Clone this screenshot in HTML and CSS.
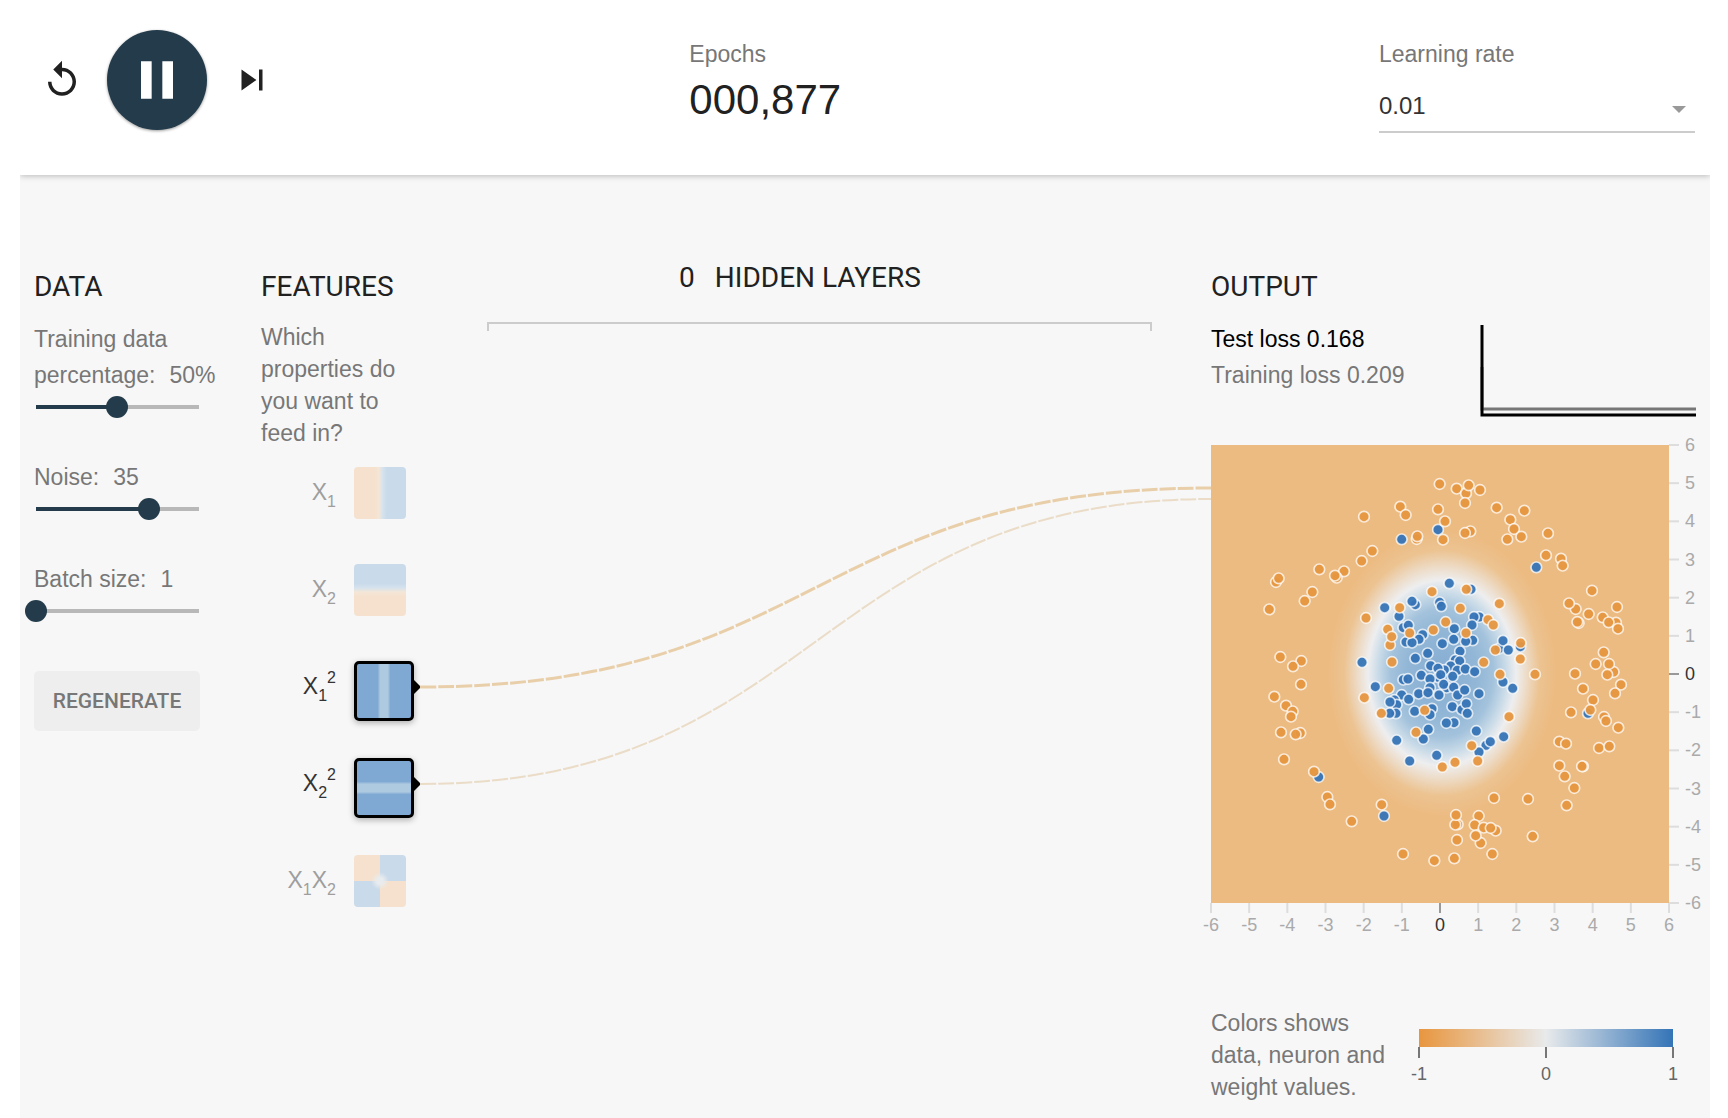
FILE: index.html
```html
<!DOCTYPE html>
<html lang="en">

<head>
  <meta charset="UTF-8">
  <meta name="viewport" content="width=device-width, initial-scale=1.0">
  <title>Neural network playground</title>
  <link rel="stylesheet" href="styles.css">
</head>

<body>
  <div class="app">
    <header class="topBar">
      <div class="controls">
        <button class="iconBtn" aria-label="Reset">
          <svg viewBox="0 0 24 24"><path d="M12 5V1L7 6l5 5V7c3.31 0 6 2.69 6 6s-2.69 6-6 6-6-2.69-6-6H4c0 4.42 3.58 8 8 8s8-3.58 8-8-3.58-8-8-8z"/></svg>
        </button>
        <button class="playBtn" aria-label="Pause">
          <svg viewBox="0 0 24 24"><path d="M6 19h4V5H6v14zm8-14v14h4V5h-4z"/></svg>
        </button>
        <button class="iconBtn" aria-label="Step">
          <svg viewBox="0 0 24 24"><path d="M6 18l8.5-6L6 6v12zM16 6v12h2V6h-2z"/></svg>
        </button>
      </div>
      <div class="stat">
        <div class="statLabel">Epochs</div>
        <div class="epochs">000,877</div>
      </div>
      <div class="stat">
        <label class="statLabel" for="learningRate">Learning rate</label>
        <div class="selectBox">
          <select id="learningRate" class="select">
            <option>0.001</option>
            <option>0.003</option>
            <option selected>0.01</option>
            <option>0.03</option>
            <option>0.1</option>
          </select>
        </div>
      </div>
    </header>

    <main class="playground">
      <section class="column">
        <h2 class="title">DATA</h2>
        <div class="setting">
          <label for="percent">Training data<br>percentage:<span class="value">50%</span></label>
          <input type="range" id="percent" class="slider" min="10" max="90" value="50" style="--fill: 50%">
        </div>
        <div class="setting">
          <label for="noise">Noise:<span class="value">35</span></label>
          <input type="range" id="noise" class="slider" min="0" max="50" value="35" style="--fill: 70%">
        </div>
        <div class="setting">
          <label for="batch">Batch size:<span class="value">1</span></label>
          <input type="range" id="batch" class="slider" min="1" max="30" value="1" style="--fill: 0%">
        </div>
        <button class="regenerateBtn">REGENERATE</button>
      </section>

      <section class="column">
        <h2 class="title">FEATURES</h2>
        <p class="hint">Which properties do you want to feed in?</p>
        <div class="feature">
          <span class="featureName">X<sub>1</sub></span>
          <button class="node nodeX" aria-label="X1"></button>
        </div>
        <div class="feature">
          <span class="featureName">X<sub>2</sub></span>
          <button class="node nodeY" aria-label="X2"></button>
        </div>
        <div class="feature active">
          <span class="featureName">X<sub>1</sub><sup>2</sup></span>
          <button class="node nodeXSquared" aria-label="X1 squared"></button>
        </div>
        <div class="feature active">
          <span class="featureName">X<sub>2</sub><sup>2</sup></span>
          <button class="node nodeYSquared" aria-label="X2 squared"></button>
        </div>
        <div class="feature">
          <span class="featureName">X<sub>1</sub>X<sub>2</sub></span>
          <button class="node nodeXY" aria-label="X1 times X2"></button>
        </div>
      </section>

      <section class="network">
        <h2 class="title layersTitle"><span>0</span><span>HIDDEN LAYERS</span></h2>
        <div class="bracket"></div>
        <svg class="links" viewBox="0 0 791 320" preserveAspectRatio="none">
          <path class="link strong" d="M0 207C396 207 396 8 791 8"/>
          <path class="link weak" d="M0 304C396 304 396 19 791 19"/>
        </svg>
      </section>

      <section class="column">
        <h2 class="title">OUTPUT</h2>
        <div class="metrics">
          <div class="losses">
            <div class="testLoss">Test loss 0.168</div>
            <div>Training loss 0.209</div>
          </div>
          <svg class="lineChart" viewBox="0 0 216 92">
            <path d="M2 42V84H216" stroke="#777"/>
            <path d="M2 0V90H216" stroke="#000"/>
          </svg>
        </div>
        <svg class="heatmap" viewBox="0 0 484 490">
          <defs>
            <radialGradient id="surface" gradientUnits="userSpaceOnUse" cx="0" cy="0" r="1" gradientTransform="translate(231 228) scale(114 143)">
              <stop offset="0" stop-color="#86add3"/>
              <stop offset=".3" stop-color="#91b6d6"/>
              <stop offset=".45" stop-color="#a3c2dc"/>
              <stop offset=".56" stop-color="#c9dbe8"/>
              <stop offset=".65" stop-color="#eeeeef"/>
              <stop offset=".74" stop-color="#eddcc8"/>
              <stop offset=".86" stop-color="#ecc391"/>
              <stop offset="1" stop-color="#ecbb82"/>
            </radialGradient>
          </defs>
          <rect width="458" height="458" fill="url(#surface)"/>
          <g id="points"></g>
          <g id="axes"></g>
        </svg>
        <div class="legend">
          <p class="legendText">Colors shows data, neuron and weight values.</p>
          <svg class="colorMap" viewBox="0 0 254 54">
            <defs>
              <linearGradient id="scale">
                <stop offset="0" stop-color="#e8963e"/>
                <stop offset=".5" stop-color="#e8eaeb"/>
                <stop offset="1" stop-color="#3474b7"/>
              </linearGradient>
            </defs>
            <rect width="254" height="18" fill="url(#scale)"/>
            <path d="M0 18V29M127 18V29M254 18V29" stroke="#777" stroke-width="2"/>
            <text x="0" y="51">-1</text>
            <text x="127" y="51">0</text>
            <text x="254" y="51">1</text>
          </svg>
        </div>
      </section>
    </main>
  </div>
  <script src="script.js"></script>
</body>

</html>
```
FILE: styles.css
```css
* {
  box-sizing: border-box;
}

body {
  margin: 0;
  background-color: #fff;
  color: #777;
  font-family: "Liberation Sans", Arial, sans-serif;
  font-size: 23px;
  line-height: 32px;
}

button {
  padding: 0;
  border: none;
  cursor: pointer;
}

.app {
  min-height: 100vh;
  margin: 0 18px 0 20px;
  overflow: hidden;
  background-color: #f7f7f7;
}

/* top bar */
.topBar {
  position: relative;
  display: grid;
  grid-template-columns: 33fr 34fr 316px;
  align-items: start;
  padding: 30px 15px 42px 0;
  background-color: #fff;
  box-shadow: 0 1px 6px rgba(0, 0, 0, 0.25);
}

.controls {
  display: flex;
  align-items: center;
  gap: 24px;
  padding-left: 21px;
}

.iconBtn {
  width: 42px;
  height: 42px;
  background: none;
  fill: #212121;
}

.iconBtn svg {
  display: block;
}

.playBtn {
  display: grid;
  place-content: center;
  width: 100px;
  height: 100px;
  border-radius: 50%;
  background-color: #233b4a;
  fill: #fff;
  box-shadow: 0 1px 3px rgba(0, 0, 0, 0.4);
}

.playBtn svg {
  width: 64px;
}

.stat {
  padding-top: 8px;
}

.statLabel {
  display: block;
}

.epochs {
  margin-top: 6px;
  color: #212121;
  font-size: 42px;
  line-height: 48px;
}

.selectBox {
  position: relative;
  margin-top: 11px;
}

.selectBox::after {
  content: "";
  position: absolute;
  top: 25px;
  right: 9px;
  border: 7px solid transparent;
  border-top-color: #999;
  border-bottom: none;
  pointer-events: none;
}

.select {
  display: block;
  width: 100%;
  height: 52px;
  padding: 0;
  border: none;
  border-bottom: 2px solid #ccc;
  border-radius: 0;
  appearance: none;
  background: none;
  color: #333;
  font: inherit;
  font-size: 24px;
}

/* columns */
.playground {
  display: grid;
  grid-template-columns: 227px 226px 1fr 499px;
  padding: 87px 0 15px 14px;
}

.column {
  padding-top: 9px;
}

.title {
  margin: 0 0 18px;
  color: #212121;
  font-family: Roboto, sans-serif;
  font-size: 28px;
  font-weight: 400;
  line-height: 32px;
}

/* data */
.setting {
  margin-bottom: 41px;
  line-height: 36px;
  white-space: nowrap;
}

.setting label {
  display: block;
}

.value {
  margin-left: 14px;
}

.slider {
  display: block;
  width: 184px;
  height: 22px;
  margin: 3px 0 0 -9px;
  appearance: none;
  background: linear-gradient(to right, #233b4a var(--fill), #b8b8b8 0) no-repeat center / calc(100% - 21px) 4px;
}

.slider::-webkit-slider-thumb {
  appearance: none;
  width: 22px;
  height: 22px;
  border-radius: 50%;
  background-color: #233b4a;
}

.regenerateBtn {
  width: 166px;
  height: 60px;
  margin-top: 8px;
  border-radius: 5px;
  background-color: #eee;
  color: #777;
  font-family: Roboto, sans-serif;
  font-size: 21px;
  font-weight: 500;
}

/* features */
.hint {
  width: 150px;
  margin: 0 0 18px;
}

.feature {
  display: flex;
  align-items: flex-start;
  gap: 18px;
  height: 97px;
  color: #9e9e9e;
}

.feature.active {
  color: #333;
}

.featureName {
  width: 75px;
  line-height: 50px;
  text-align: right;
}

.featureName sub,
.featureName sup {
  position: relative;
  font-size: 16px;
  line-height: 0;
  vertical-align: baseline;
}

.featureName sub {
  top: 7px;
}

.featureName sup {
  top: -11px;
}

.node {
  position: relative;
  width: 52px;
  height: 52px;
  border-radius: 4px;
}

.active .node {
  width: 60px;
  height: 60px;
  border: 3px solid #000;
  border-radius: 5px;
  box-shadow: 0 2px 6px rgba(0, 0, 0, 0.3);
}

.active .node::after {
  content: "";
  position: absolute;
  top: 16px;
  right: -10px;
  border: 7px solid transparent;
  border-left-color: #000;
  border-right: none;
}

.nodeX {
  background: linear-gradient(to right, #f5e1cd 40%, #f4e6d7 48%, #d6e3ed 55%, #c9daea 63%);
}

.nodeY {
  background: linear-gradient(to top, #f5e1cd 37%, #f4e6d7 46%, #d6e3ed 54%, #c9daea 62%);
}

.nodeXSquared {
  background: linear-gradient(to right, #7fa8d2 38%, #aecae0 43%, #aecae0 57%, #7fa8d2 62%);
}

.nodeYSquared {
  background: linear-gradient(to bottom, #7fa8d2 38%, #aecae0 43%, #aecae0 57%, #7fa8d2 62%);
}

.nodeXY {
  background:
    radial-gradient(circle, #e9ecee 3px, transparent 9px),
    conic-gradient(#c9daea 25%, #f5e1cd 0 50%, #c9daea 0 75%, #f5e1cd 0);
}

/* network */
.network {
  position: relative;
}

.layersTitle {
  display: flex;
  justify-content: center;
  gap: 20px;
  margin-bottom: 28px;
  padding-right: 98px;
}

.bracket {
  height: 9px;
  margin-right: 59px;
  border: 2px solid #ccc;
  border-bottom: none;
}

.links {
  position: absolute;
  top: 218px;
  left: -67px;
  width: calc(100% + 67px);
  height: 320px;
}

.link {
  fill: none;
  stroke-dasharray: 16 2;
}

.strong {
  stroke: #e9cfa9;
  stroke-width: 3;
}

.weak {
  stroke: #eadcc7;
  stroke-width: 2;
}

/* output */
.metrics {
  display: flex;
  justify-content: space-between;
  height: 124px;
  padding-right: 14px;
}

.losses {
  line-height: 36px;
}

.testLoss {
  color: #000;
}

.lineChart {
  width: 216px;
  height: 92px;
  margin-top: 4px;
  fill: none;
  stroke-width: 3;
}

.heatmap {
  display: block;
  width: 484px;
  height: 490px;
  margin-bottom: 72px;
  overflow: visible;
}

#points circle {
  stroke: #fff;
  stroke-opacity: 0.75;
  stroke-width: 5;
  fill-opacity: 0.95;
}

.orange {
  fill: #e6963f;
}

.blue {
  fill: #3674b6;
}

.tick line {
  stroke: #ddd;
  stroke-width: 2;
}

.tick text {
  fill: #aaa;
  font-size: 18px;
}

.tick.zero line {
  stroke: #999;
}

.tick.zero text {
  fill: #333;
}

.legend {
  display: flex;
  gap: 28px;
}

.legendText {
  width: 180px;
  margin: 0;
}

.colorMap {
  width: 254px;
  height: 54px;
  margin-top: 22px;
  overflow: visible;
}

.colorMap text {
  fill: #666;
  font-size: 18px;
  text-anchor: middle;
}
```
FILE: script.js
```js
const SVG_NS = "http://www.w3.org/2000/svg";
const pointsGroup = document.querySelector("#points");
const axesGroup = document.querySelector("#axes");

// points are stored per area at 3x, relative to the area's origin
const areas = [
  {
    x: -3, y: -45,
    orange: [[689,162],[740,176],[768,190],[776,166],[571,230],[587,255],[462,260],[684,238],[705,274],[765,219],[620,327],[622,319],[699,329],[781,304],[765,309],[487,363],[455,393],[328,418],[402,424],[380,443],[375,437],[198,456],[206,445],[307,486],[284,513],[178,538],[211,681],[274,693],[249,709],[273,763]],
    blue: [[575,328],[684,299]]
  },
  {
    x: 747, y: -45,
    orange: [[60,180],[110,233],[193,242],[151,269],[162,297],[142,328],[184,320],[264,310],[258,376],[303,386],[308,407],[396,482],[347,537],[327,520],[386,552],[356,579],[352,576],[428,562],[468,578],[474,596],[446,577],[471,531],[431,667],[407,702],[461,726],[447,702],[442,734],[345,731]],
    blue: []
  },
  {
    x: -3, y: 705,
    orange: [[193,50],[228,77],[248,94],[243,110],[213,157],[271,159],[257,163],[222,238],[312,275],[352,351],[360,373],[425,424],[515,374],[579,522],[673,542],[733,535],[741,480],[743,433],[736,434],[738,405]],
    blue: [[326,291],[522,408]]
  },
  {
    x: 747, y: 705,
    orange: [[369,26],[483,14],[465,40],[399,60],[333,97],[391,90],[432,111],[438,123],[475,143],[298,185],[318,191],[417,204],[448,199],[298,257],[369,259],[366,259],[314,289],[343,324],[320,376],[204,357],[102,354],[56,408],[44,435],[71,443],[107,452],[92,444],[62,489],[47,467],[97,522],[218,469]],
    blue: [[384,100]]
  },
  {
    x: 417, y: 345,
    orange: [[48,174],[43,413],[246,95],[149,143],[331,145],[448,131],[287,186],[250,210],[113,208],[179,219],[120,255],[125,230],[126,306],[116,385],[94,460],[348,219],[414,179],[430,195],[436,270],[401,307],[512,249],[511,297],[555,343],[450,343],[477,470],[198,517],[224,451],[365,557],[383,603],[315,607],[277,621],[349,88]],
    blue: [[559,22],[298,70],[363,88],[196,134],[186,124],[269,127],[274,139],[104,143],[147,169],[388,171],[372,171],[366,195],[160,203],[175,196],[313,206],[218,224],[207,238],[168,246],[186,248],[277,251],[311,238],[368,241],[347,244],[447,266],[459,242],[475,270],[511,260],[330,274],[233,280],[196,295],[316,300],[329,303],[36,307],[242,317],[302,318],[322,331],[283,330],[264,325],[346,327],[374,335],[214,346],[265,352],[240,357],[272,344],[308,349],[160,359],[174,357],[76,380],[459,366],[488,385],[240,383],[290,383],[281,373],[311,382],[323,405],[344,390],[387,401],[206,401],[234,398],[267,405],[155,405],[133,420],[176,418],[140,434],[120,426],[138,460],[119,460],[194,454],[246,446],[240,464],[307,440],[336,449],[349,431],[352,460],[312,488],[289,489],[235,508],[220,537],[140,541],[179,603],[260,586],[379,513],[461,530],[408,556],[421,545],[387,576]]
  }
];

const create = (name, attrs, parent) => {
  const el = document.createElementNS(SVG_NS, name);
  Object.keys(attrs).forEach(key => el.setAttribute(key, attrs[key]));
  parent.appendChild(el);
  return el;
}

const drawPoints = () => {
  areas.forEach(area => {
    const group = create("g", { transform: `scale(${1 / 3}) translate(${area.x} ${area.y})` }, pointsGroup);
    ["blue", "orange"].forEach(color => {
      area[color].forEach(([cx, cy]) => create("circle", { class: color, cx, cy, r: 16 }, group));
    });
  });
}

const drawAxes = () => {
  for (let i = -6; i <= 6; i++) {
    const pos = (i + 6) * 458 / 12;
    const className = i === 0 ? "tick zero" : "tick";

    const bottom = create("g", { class: className, transform: `translate(${pos} 458)` }, axesGroup);
    create("line", { y2: 10 }, bottom);
    create("text", { y: 28, "text-anchor": "middle" }, bottom).textContent = i;

    const right = create("g", { class: className, transform: `translate(458 ${458 - pos})` }, axesGroup);
    create("line", { x2: 10 }, right);
    create("text", { x: 16, y: 6 }, right).textContent = i;
  }
}

drawPoints();
drawAxes();
```
